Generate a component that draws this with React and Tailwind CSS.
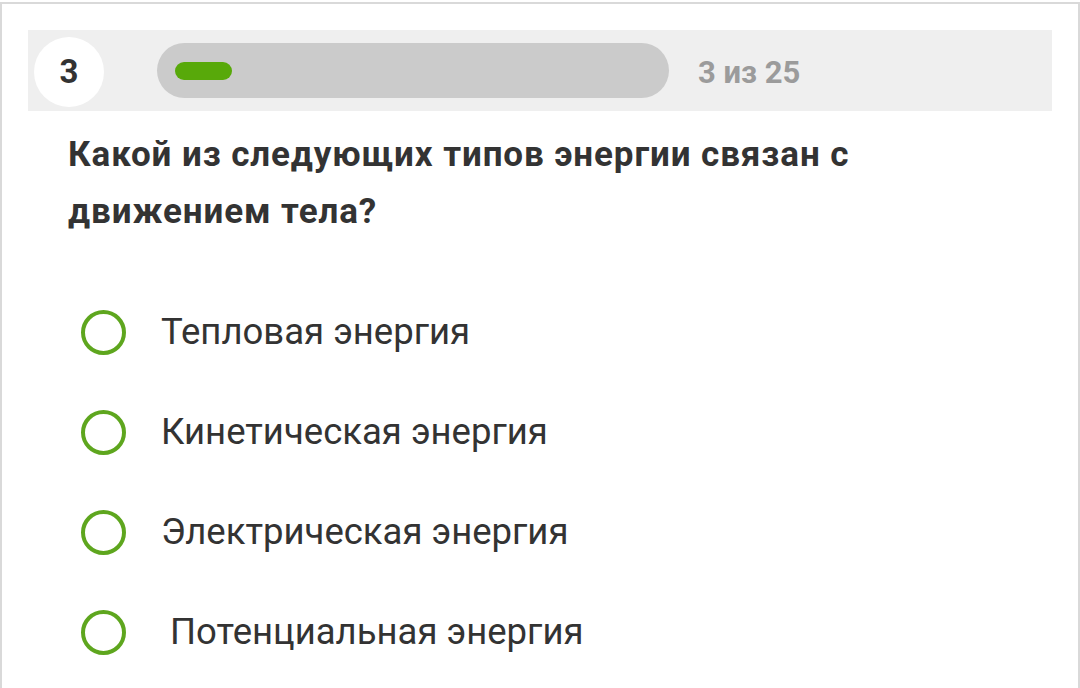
import React, { useState } from "react";

const options = [
  "Тепловая энергия",
  "Кинетическая энергия",
  "Электрическая энергия",
  " Потенциальная энергия",
];

const App = () => {
  const [selected, setSelected] = useState(null);

  return (
    <div
      className="w-[1080px] h-[688px] bg-white overflow-hidden pt-[2px]"
      style={{ fontFamily: "Roboto, 'Noto Sans', sans-serif" }}
    >
      <div className="h-full border-t-2 border-x-2 border-[#d9d9d9] flex flex-col">
        <header className="mx-[26px] mt-[26px] h-[81px] bg-[#efefef] flex items-center">
          <div className="ml-[6px] w-[70px] h-[70px] rounded-full bg-white flex items-center justify-center text-[33px] font-bold text-[#333333] mt-[3px]">
            3
          </div>
          <div className="ml-[53px] w-[512px] h-[55px] rounded-full bg-[#cbcbcb] flex items-center pl-[18px]">
            <div className="w-[57px] h-[18px] rounded-full bg-[#58a90a]" />
          </div>
          <span className="ml-[29px] text-[31px] font-bold text-[#9b9b9b] mt-[5px]">
            3 из 25
          </span>
        </header>

        <h2 className="px-[66px] mt-[15px] text-[35px] tracking-[0.9px] leading-[57px] font-bold text-[#333333]">
          Какой из следующих типов энергии связан с
          <br />
          движением тела?
        </h2>

        <ul className="mt-[42px]">
          {options.map((opt, i) => (
            <li
              key={i}
              onClick={() => setSelected(i)}
              className="h-[100px] flex items-center pl-[79px] cursor-pointer"
            >
              <span className="w-[45px] h-[45px] rounded-full border-4 border-[#5ea61e] flex items-center justify-center shrink-0">
                {selected === i && (
                  <span className="w-[21px] h-[21px] rounded-full bg-[#5ea61e]" />
                )}
              </span>
              <span className="ml-[35px] text-[36.5px] text-[#333333] whitespace-pre">
                {opt}
              </span>
            </li>
          ))}
        </ul>
      </div>
    </div>
  );
};

export default App;
